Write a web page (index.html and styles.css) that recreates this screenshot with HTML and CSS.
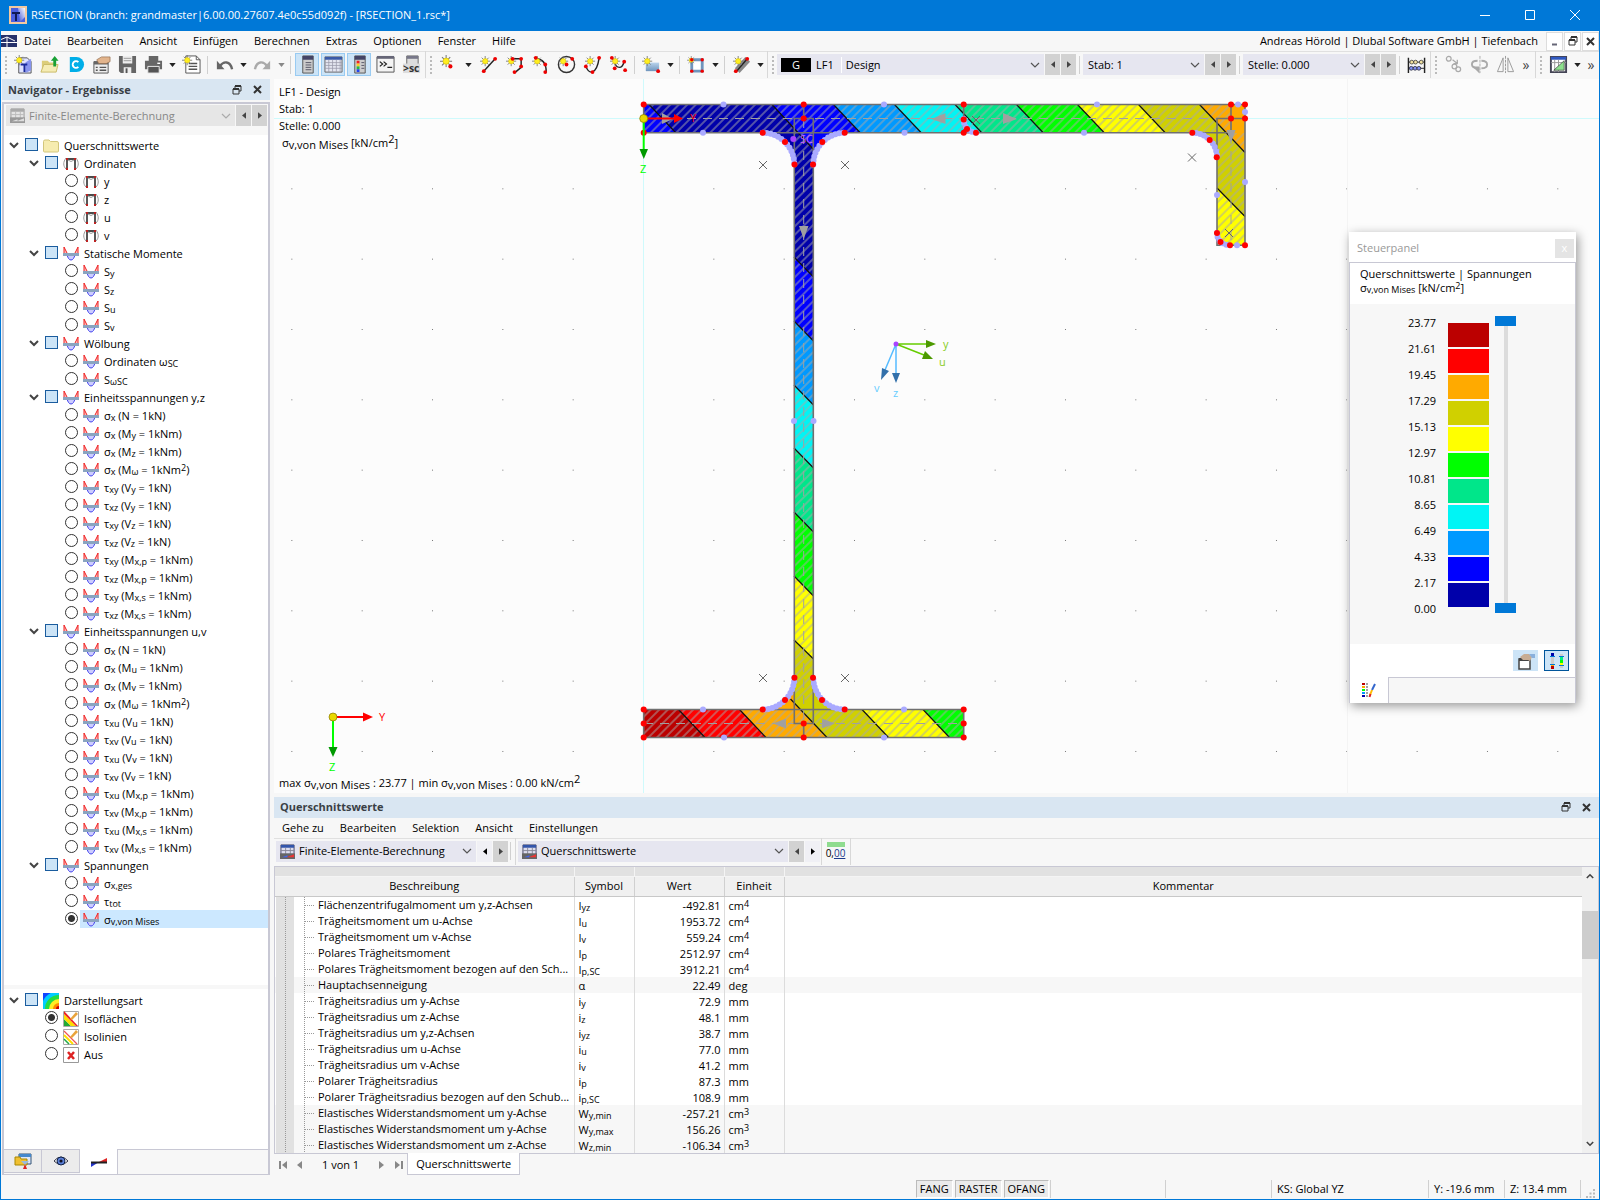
FILE: index.html
```html
<!DOCTYPE html>
<html lang="de">
<head>
<meta charset="utf-8">
<title>RSECTION</title>
<link rel="stylesheet" href="styles.css">
</head>
<body>
<svg class="defs" aria-hidden="true">
  <defs>
    <linearGradient id="gBlue" x1="0" y1="0" x2="0" y2="1"><stop offset="0" stop-color="#b9d3ec"/><stop offset="1" stop-color="#6f95bd"/></linearGradient>
    <linearGradient id="gApp" x1="0" y1="1" x2="1" y2="0"><stop offset="0" stop-color="#3a4fd8"/><stop offset="1" stop-color="#fff"/></linearGradient>
    <symbol id="chev" viewBox="0 0 10 6"><path d="M1 1l4 4 4-4" fill="none" stroke="#555" stroke-width="1.2"/></symbol>
    <symbol id="chevb" viewBox="0 0 10 7"><path d="M1 1l4 4 4-4" fill="none" stroke="#444" stroke-width="2"/></symbol>
    <symbol id="tl" viewBox="0 0 5 8"><path d="M5 0v8L0 4z" fill="currentColor"/></symbol>
    <symbol id="tr" viewBox="0 0 5 8"><path d="M0 0v8l5-4z" fill="currentColor"/></symbol>
    <symbol id="td" viewBox="0 0 8 5"><path d="M0 0h8L4 5z" fill="currentColor"/></symbol>
    <symbol id="rest" viewBox="0 0 10 10"><path d="M3 3V1h6v5H7M1 4h6v5H1z" fill="none" stroke="#333"/><path d="M3 1h6M1 4h6" stroke="#333" stroke-width="2"/></symbol>
    <symbol id="xx" viewBox="0 0 9 9"><path d="M1 1l7 7M8 1L1 8" stroke="#333" stroke-width="2"/></symbol>
    <symbol id="star" viewBox="0 0 12 12"><path d="M6 0v12M0 6h12M2 2l8 8M10 2l-8 8" stroke="#777" stroke-width="1"/><circle cx="6" cy="6" r="3" fill="#ffee20" stroke="#d8c000" stroke-width=".6"/></symbol>
    <symbol id="mom" viewBox="0 0 16 14"><path d="M1 7V0l3.500 7M15 7V0l-3.500 7" fill="#fbb" stroke="#e22" stroke-width="1"/><path d="M4 8c1 3 2 5 4 5s3-2 4-5z" fill="#ccf" stroke="#44e" stroke-width="1"/><path d="M0 7.500h16" stroke="#8aa4c0" stroke-width="3"/></symbol>
    <symbol id="frm" viewBox="0 0 16 14"><path d="M3 1C0 5 0 9 3 12M13 1c3 4 3 8 0 11" fill="none" stroke="#999"/><path d="M4 12V2h8v10" fill="none" stroke="#111" stroke-width="1.400"/><path d="M5 3q3 3 6 0" fill="none" stroke="#999"/><path d="M3 1h2v2H3zM11 1h2v2h-2zM3 11h2v2H3zM11 11h2v2h-2z" fill="#b22"/></symbol>
    <symbol id="fold" viewBox="0 0 16 14"><path d="M.5 2.500q0-1.500 1.500-1.500h4l1.500 1.500h6.500q1.500 0 1.500 1.500v8q0 1-1 1H1.500q-1 0-1-1z" fill="#f6ecb0" stroke="#d2c67c"/></symbol>
    <symbol id="calc" viewBox="0 0 16 16"><path d="M1 1h14v10H1z" fill="#dde" stroke="#446"/><path d="M1 1h14v3H1z" fill="#3355aa"/><path d="M1 7h14M6 4v7M11 4v7" stroke="#889"/><path d="M0 10h16v6H0z" fill="#666"/><path d="M2 14l6-2v2z" fill="#46e"/><path d="M15 11v3H7z" fill="#e33"/></symbol>
    <symbol id="calcg" viewBox="0 0 16 16"><path d="M1 1h14v10H1z" fill="#e4e4e4" stroke="#999"/><path d="M1 1h14v3H1z" fill="#aaa"/><path d="M1 7h14M6 4v7M11 4v7" stroke="#bbb"/><path d="M0 10h16v6H0z" fill="#999"/><path d="M2 14l6-2v2zM15 11v3H7z" fill="#ddd"/></symbol>
    <symbol id="gut" viewBox="0 0 40 16"><path d="M0 0h18v16H0z" fill="#e1e1e1"/><path d="M9.500 0v16M28.500 0v16M29 8.500h10" stroke="#999" stroke-dasharray="1 1" fill="none"/></symbol>
    <pattern id="grid" width="70.33" height="70.33" patternUnits="userSpaceOnUse" x="643" y="118"><path d="M0 0h1v1H0z" fill="#777"/></pattern>
    <pattern id="hatch" width="6" height="6" patternUnits="userSpaceOnUse" patternTransform="rotate(45)"><path d="M2 0v6" stroke="#a8a8a8" stroke-width="1"/></pattern>
    <clipPath id="sec"><path d="M643.700 104.500H1245V245.300H1230A13 12.500 0 0 1 1217 233V157.300A24.500 24.500 0 0 0 1192.300 132.700H844.700A31.700 31.700 0 0 0 813.300 164.500V677.700A31.700 31.700 0 0 0 844.700 709.500H963.700V737.500H643.700V709.500H762.700A31.700 31.700 0 0 0 794.300 677.700V164.500A31.700 31.700 0 0 0 762.700 132.700H643.700Z"/></clipPath>
  </defs>
</svg>

<header class="title">
  <svg width="18" height="18" viewBox="0 0 18 18"><path d="M1 1h16v16H1z" fill="#4a5fe0" stroke="#f3c9a0" stroke-width="2"/><path d="M9 2h7v9l-5 5z" fill="url(#gApp)"/><path d="M3 6h8v2H8v7H6V8H3z" fill="#111a55"/></svg>
  <h1>RSECTION (branch: grandmaster|6.00.00.27607.4e0c55d092f) - [RSECTION_1.rsc*]</h1>
  <button class="wb" aria-label="Minimieren"><svg width="10" height="10"><path d="M0 5.500h10" stroke="#fff"/></svg></button>
  <button class="wb" aria-label="Maximieren"><svg width="10" height="10"><path d="M.5.500h9v9h-9z" fill="none" stroke="#fff"/></svg></button>
  <button class="wb" aria-label="Schließen"><svg width="10" height="10"><path d="M0 0l10 10M10 0L0 10" stroke="#fff"/></svg></button>
</header>

<nav class="menu">
  <svg width="16" height="12" viewBox="0 0 16 12"><path d="M0 0h16v12H0z" fill="#26316b"/><path d="M0 7.500h16M0 4.500L6 2l8 4M6 2v10" stroke="#fff" fill="none"/></svg>
  <a href="#">Datei</a><a href="#">Bearbeiten</a><a href="#">Ansicht</a><a href="#">Einfügen</a><a href="#">Berechnen</a><a href="#">Extras</a><a href="#">Optionen</a><a href="#">Fenster</a><a href="#">Hilfe</a>
  <span class="user">Andreas Hörold | Dlubal Software GmbH | Tiefenbach</span>
  <button class="mdi" aria-label="Fenster minimieren"><svg width="9" height="9"><path d="M2 7.500h5" stroke="#667" stroke-width="2"/></svg></button>
  <button class="mdi" aria-label="Fenster wiederherstellen"><svg width="10" height="10"><use href="#rest"/></svg></button>
  <button class="mdi" aria-label="Fenster schließen"><svg width="9" height="9"><use href="#xx"/></svg></button>
</nav>

<div class="bar">
  <i class="grip"></i>
  <button class="tb" aria-label="Neu"><svg viewBox="0 0 20 20"><path d="M5 3h9l4 4v12H5z" fill="#dfe3ff" stroke="#555"/><path d="M12 8l6-4v12l-6 3z" fill="#8794ee"/><path d="M7 9h7v2h-2v7h-2v-7H7z" fill="#1a2a9c"/><use href="#star" width="11" height="11"/></svg></button>
  <button class="tb" aria-label="Öffnen"><svg viewBox="0 0 20 20"><path d="M2 6h6l2 2h7v10H2z" fill="#dccd7a"/><path d="M1 18l3-8h15l-2 8z" fill="#f5ecb4" stroke="#c9ba66"/><path d="M15.500 1l4 5h-2.500v6h-3V6h-2.500z" fill="#18a035"/></svg></button>
  <button class="tb" aria-label="Cloud"><svg viewBox="0 0 20 20"><path d="M4 2h7a8 8 0 0 1 0 16H4z" fill="#00aee8"/><path d="M13 7.500a3.500 3.500 0 1 0 0 5" fill="none" stroke="#fff" stroke-width="2"/></svg></button>
  <button class="tb" aria-label="Eigenschaften"><svg viewBox="0 0 20 20"><path d="M2 7h15v12H2z" fill="#eee" stroke="#555"/><path d="M2 7h15v3H2z" fill="#666"/><path d="M4 13h2M4 16h2M8 13h7M8 16h7" stroke="#555" stroke-width="1.500"/><path d="M5 5l5-3h9v5l-4 2-8 0z" fill="#e2b48c" stroke="#8f6a4c" stroke-width=".7"/></svg></button>
  <button class="tb" aria-label="Speichern"><svg viewBox="0 0 20 20"><path d="M1 1h18v18H3l-2-2z" fill="#666"/><path d="M5 1h10v8H5zM6 13h8v6H6z" fill="#eee"/><path d="M6 3.500h8M6 6h8" stroke="#999"/><path d="M8 14h2v5H8z" fill="#555"/></svg></button>
  <button class="tb" aria-label="Drucken"><svg viewBox="0 0 20 20"><path d="M5 1h10v5H5zM1 6h18v9H1z" fill="#666"/><path d="M4 12h12v7H4z" fill="#555" stroke="#eee"/><path d="M14 8h3v1.500h-3z" fill="#fff"/></svg></button>
  <button class="ca" aria-label="Druckoptionen"><svg><use href="#td"/></svg></button>
  <button class="tb" aria-label="Protokoll"><svg viewBox="0 0 20 20"><path d="M4 1h11l4 4v14H4z" fill="#fff" stroke="#555"/><path d="M15 1v4h4" fill="none" stroke="#555"/><path d="M7 9h9M7 12h9M7 15h9" stroke="#555" stroke-width="1.500"/><use href="#star" width="11" height="11"/></svg></button>
  <i class="sep"></i>
  <button class="tb" aria-label="Rückgängig"><svg viewBox="0 0 20 20"><path d="M5 12C9 6 16 6 18 15" fill="none" stroke="#666" stroke-width="2.500"/><path d="M2 6v9h8z" fill="#666"/></svg></button>
  <button class="ca" aria-label="Verlauf"><svg><use href="#td"/></svg></button>
  <button class="tb off" aria-label="Wiederholen"><svg viewBox="0 0 20 20"><path d="M15 12C11 6 4 6 2 15" fill="none" stroke="#aaa" stroke-width="2.500"/><path d="M18 6v9h-8z" fill="#aaa"/></svg></button>
  <button class="ca off" aria-label="Verlauf vorwärts"><svg><use href="#td"/></svg></button>
  <i class="sep"></i>
  <button class="tb on" aria-label="Navigator"><svg viewBox="0 0 20 20"><path d="M5 1h11v18H5z" fill="#ccc" stroke="#555"/><path d="M5 1h11v4H5z" fill="#446"/><path d="M8 8h6M8 10.500h6M8 13h6M8 15.500h6" stroke="#556"/></svg></button>
  <button class="tb on" aria-label="Tabellen"><svg viewBox="0 0 20 20"><path d="M1 2h18v16H1z" fill="#e4e6f0" stroke="#666"/><path d="M1 2h18v3H1z" fill="#3a5aa8"/><path d="M1 8h18M1 11h18M1 14h18M5 5v13M9 5v13M13 5v13M17 5v13" stroke="#99a" stroke-width=".8"/></svg></button>
  <button class="tb on" aria-label="Steuerpanel"><svg viewBox="0 0 20 20"><path d="M5 1h11v18H5z" fill="#ccc" stroke="#555"/><path d="M5 1h11v4H5z" fill="#446"/><path d="M7 6h3v3H7z" fill="#e22"/><path d="M7 9h3v3H7z" fill="#fc2"/><path d="M7 12h3v3H7z" fill="#2b4"/><path d="M7 15h3v3H7z" fill="#24e"/><path d="M12 8h3M12 11h3M12 14h3" stroke="#556"/></svg></button>
  <button class="tb" aria-label="Konsole"><svg viewBox="0 0 20 20"><path d="M1 2h18v16H1z" fill="#f4f4f4" stroke="#555"/><path d="M1 1h18v3H1z" fill="#667"/><path d="M4 7l3 2.500L4 12M8 7l3 2.500L8 12M12 13h5" fill="none" stroke="#222" stroke-width="1.300"/></svg></button>
  <button class="tb" aria-label="Skript"><svg viewBox="0 0 20 20"><path d="M5 1h12v9H5z" fill="#ddd" stroke="#666"/><path d="M5 1h12v3H5z" fill="#778"/><path d="M1 9h18v10H1z" fill="#ddd"/><text x="1" y="18" class="sc">&gt;sc</text></svg></button>
  <i class="edge"></i><i class="grip"></i>
  <button class="tb" aria-label="Knoten"><svg viewBox="0 0 20 20"><use href="#star" x="1" y="0" width="13" height="13"/><circle cx="12" cy="12" r="2.200" fill="#e00"/></svg></button>
  <button class="ca wide" aria-label="Knotenoptionen"><svg><use href="#td"/></svg></button>
  <button class="tb" aria-label="Linie"><svg viewBox="0 0 20 20"><path d="M5 17L17 4" stroke="#222" stroke-width="1.500"/><use href="#star" x="1" y="1" width="11" height="11"/><circle cx="5" cy="17" r="2" fill="#e00"/><circle cx="17" cy="4" r="2" fill="#e00"/></svg></button>
  <button class="tb" aria-label="Polylinie"><svg viewBox="0 0 20 20"><path d="M7 4h10v9l-6 5" fill="none" stroke="#222" stroke-width="1.500"/><use href="#star" x="1" y="1" width="11" height="11"/><g fill="#e00"><circle cx="8" cy="4" r="2"/><circle cx="17" cy="4" r="2"/><circle cx="17" cy="12" r="2"/><circle cx="10" cy="18" r="2"/></g></svg></button>
  <button class="tb" aria-label="Bogen"><svg viewBox="0 0 20 20"><path d="M5 4q11 0 11 14" fill="none" stroke="#222" stroke-width="1.500"/><use href="#star" x="1" y="1" width="11" height="11"/><g fill="#e00"><circle cx="5" cy="3" r="2"/><circle cx="15" cy="10" r="2"/><circle cx="15" cy="18" r="2"/></g></svg></button>
  <button class="tb" aria-label="Kreis"><svg viewBox="0 0 20 20"><circle cx="10" cy="10" r="8.500" fill="none" stroke="#333" stroke-width="1.500"/><use href="#star" x="1" y="1" width="11" height="11"/><circle cx="10" cy="10" r="2" fill="#e00"/><circle cx="16" cy="4" r="2" fill="#e00"/></svg></button>
  <button class="tb" aria-label="Parabel"><svg viewBox="0 0 20 20"><path d="M3 11c2 9 11 12 14-8" fill="none" stroke="#222" stroke-width="1.500"/><use href="#star" x="2" y="1" width="11" height="11"/><g fill="#e00"><circle cx="3" cy="12" r="2"/><circle cx="10" cy="18" r="2"/><circle cx="17" cy="3" r="2"/></g></svg></button>
  <button class="tb" aria-label="Spline"><svg viewBox="0 0 20 20"><path d="M4 4c3 6 3 9 7 9 3 0 4-3 5-6" fill="none" stroke="#222" stroke-width="1.500"/><use href="#star" x="1" y="1" width="11" height="11"/><g fill="#e00"><circle cx="3" cy="3" r="2"/><circle cx="6" cy="14" r="2"/><circle cx="16" cy="7" r="2"/><circle cx="17" cy="16" r="2"/></g></svg></button>
  <i class="sep"></i>
  <button class="tb" aria-label="Element"><svg viewBox="0 0 20 20"><path d="M4 8h14v9H4z" fill="url(#gBlue)"/><use href="#star" x="0" y="1" width="11" height="11"/><circle cx="17" cy="17" r="2" fill="#e00"/></svg></button>
  <button class="ca" aria-label="Elementoptionen"><svg><use href="#td"/></svg></button>
  <i class="sep"></i>
  <button class="tb" aria-label="Öffnung"><svg viewBox="0 0 20 20"><path d="M5 5h11v12H5z" fill="#fff" stroke="#6f95bd" stroke-width="3"/><use href="#star" x="0" y="1" width="9" height="9"/><g fill="#e00"><circle cx="5" cy="5" r="1.800"/><circle cx="16" cy="5" r="1.800"/><circle cx="16" cy="17" r="1.800"/><circle cx="5" cy="17" r="1.800"/></g></svg></button>
  <button class="ca" aria-label="Öffnungsoptionen"><svg><use href="#td"/></svg></button>
  <i class="sep"></i>
  <button class="tb" aria-label="Stab"><svg viewBox="0 0 20 20"><path d="M3 14L14 2l5 5L8 19z" fill="#888"/><path d="M5 17L16 4" stroke="#222" stroke-width="1.500"/><use href="#star" x="1" y="1" width="11" height="11"/><circle cx="4" cy="17" r="2" fill="#e00"/><circle cx="16" cy="4" r="2" fill="#e00"/></svg></button>
  <button class="ca" aria-label="Staboptionen"><svg><use href="#td"/></svg></button>
  <i class="edge"></i><i class="grip"></i>
  <div class="combo grow"><span class="badge">G</span><span class="lf">LF1</span><select aria-label="Lastfall"><option>Design</option></select><svg width="10" height="6"><use href="#chev"/></svg></div>
  <button class="arr" aria-label="Zurück"><svg><use href="#tl"/></svg></button><button class="arr" aria-label="Weiter"><svg><use href="#tr"/></svg></button>
  <i class="sep"></i>
  <div class="combo mid"><select aria-label="Stab"><option>Stab: 1</option></select><svg width="10" height="6"><use href="#chev"/></svg></div>
  <button class="arr" aria-label="Zurück"><svg><use href="#tl"/></svg></button><button class="arr" aria-label="Weiter"><svg><use href="#tr"/></svg></button>
  <i class="sep"></i>
  <div class="combo mid"><select aria-label="Stelle"><option>Stelle: 0.000</option></select><svg width="10" height="6"><use href="#chev"/></svg></div>
  <button class="arr" aria-label="Zurück"><svg><use href="#tl"/></svg></button><button class="arr" aria-label="Weiter"><svg><use href="#tr"/></svg></button>
  <i class="sep"></i>
  <button class="tb" aria-label="Berechnen"><svg viewBox="0 0 20 20"><path d="M1.500 3v16M18.500 3v16" stroke="#222" stroke-width="1.500"/><path d="M2 7.500h16M2 14h16" stroke="#222"/><g fill="#f0e0a0" stroke="#333" stroke-width=".8"><circle cx="5" cy="7.500" r="2"/><circle cx="9" cy="7.500" r="2"/><circle cx="15" cy="7.500" r="2"/></g><g fill="#8090f0" stroke="#223" stroke-width=".8"><circle cx="4.500" cy="14" r="2"/><circle cx="8.500" cy="14" r="2"/><circle cx="12.500" cy="14" r="2"/></g></svg></button>
  <i class="edge"></i><i class="grip"></i>
  <button class="tb off" aria-label="Verschieben"><svg viewBox="0 0 20 20" fill="none" stroke="#aaa" stroke-width="1.300"><circle cx="5" cy="4" r="2.500"/><circle cx="11" cy="12" r="2.500"/><circle cx="15" cy="15" r="2.500"/><path d="M9 5l5 4M14 5v4h-4"/></svg></button>
  <button class="tb off" aria-label="Drehen"><svg viewBox="0 0 20 20" fill="none" stroke="#aaa" stroke-width="2"><path d="M8 14c-8-1-8-8 0-8M12 6c8 0 8 8 0 8"/><path d="M5 13h4v4z" fill="#aaa"/><path d="M10.500 1v18" stroke-width="1" stroke-dasharray="3 1"/></svg></button>
  <button class="tb off" aria-label="Spiegeln"><svg viewBox="0 0 20 20" fill="none" stroke="#999"><path d="M1.500 17.500L7.500 3v14.500zM18.500 17.500L12.500 3v14.500z"/><path d="M10 1v18" stroke-dasharray="3 1"/></svg></button>
  <button class="more" aria-label="Mehr">»</button>
  <i class="edge"></i><i class="grip"></i>
  <button class="tb" aria-label="Ansicht"><svg viewBox="0 0 20 20"><path d="M2 2h16v16H2z" fill="#fff" stroke="#445" stroke-width="2"/><path d="M2 2h16v3H2z" fill="#2f58c0"/><path d="M6 5v13M10 5v13M2 8h16" stroke="#999"/><path d="M5 16L16 6v10z" fill="#8de08d" stroke="#333" stroke-width=".7"/></svg></button>
  <button class="ca" aria-label="Ansichtsoptionen"><svg><use href="#td"/></svg></button>
  <button class="more" aria-label="Mehr">»</button>
</div>

<main>
  <aside class="nav">
    <h2 class="head">Navigator - Ergebnisse<button aria-label="Abdocken"><svg width="10" height="10"><use href="#rest"/></svg></button><button aria-label="Schließen"><svg width="9" height="9"><use href="#xx"/></svg></button></h2>
    <div class="frame">
      <div class="navsel">
        <div class="combo dis"><svg width="15" height="15"><use href="#calcg"/></svg><select aria-label="Berechnung" disabled><option>Finite-Elemente-Berechnung</option></select><svg width="10" height="6" opacity=".4"><use href="#chev"/></svg></div>
        <button class="arr" aria-label="Zurück"><svg><use href="#tl"/></svg></button><button class="arr" aria-label="Weiter"><svg><use href="#tr"/></svg></button>
      </div>
      <div class="tree">
        <label class="row l0"><svg class="cv"><use href="#chevb"/></svg><input type="checkbox"><span class="cell"><svg><use href="#fold"/></svg>Querschnittswerte</span></label>
        <label class="row l1"><svg class="cv"><use href="#chevb"/></svg><input type="checkbox"><span class="cell"><svg><use href="#frm"/></svg>Ordinaten</span></label>
        <label class="row l2"><input type="radio" name="res"><span class="cell"><svg><use href="#frm"/></svg>y</span></label>
        <label class="row l2"><input type="radio" name="res"><span class="cell"><svg><use href="#frm"/></svg>z</span></label>
        <label class="row l2"><input type="radio" name="res"><span class="cell"><svg><use href="#frm"/></svg>u</span></label>
        <label class="row l2"><input type="radio" name="res"><span class="cell"><svg><use href="#frm"/></svg>v</span></label>
        <label class="row l1"><svg class="cv"><use href="#chevb"/></svg><input type="checkbox"><span class="cell"><svg><use href="#mom"/></svg>Statische Momente</span></label>
        <label class="row l2"><input type="radio" name="res"><span class="cell"><svg><use href="#mom"/></svg><span>S<sub>y</sub></span></span></label>
        <label class="row l2"><input type="radio" name="res"><span class="cell"><svg><use href="#mom"/></svg><span>S<sub>z</sub></span></span></label>
        <label class="row l2"><input type="radio" name="res"><span class="cell"><svg><use href="#mom"/></svg><span>S<sub>u</sub></span></span></label>
        <label class="row l2"><input type="radio" name="res"><span class="cell"><svg><use href="#mom"/></svg><span>S<sub>v</sub></span></span></label>
        <label class="row l1"><svg class="cv"><use href="#chevb"/></svg><input type="checkbox"><span class="cell"><svg><use href="#mom"/></svg>Wölbung</span></label>
        <label class="row l2"><input type="radio" name="res"><span class="cell"><svg><use href="#mom"/></svg><span>Ordinaten ω<sub>SC</sub></span></span></label>
        <label class="row l2"><input type="radio" name="res"><span class="cell"><svg><use href="#mom"/></svg><span>S<sub>ωSC</sub></span></span></label>
        <label class="row l1"><svg class="cv"><use href="#chevb"/></svg><input type="checkbox"><span class="cell"><svg><use href="#mom"/></svg>Einheitsspannungen y,z</span></label>
        <label class="row l2"><input type="radio" name="res"><span class="cell"><svg><use href="#mom"/></svg><span>σ<sub>x</sub> (N = 1kN)</span></span></label>
        <label class="row l2"><input type="radio" name="res"><span class="cell"><svg><use href="#mom"/></svg><span>σ<sub>x</sub> (M<sub>y</sub> = 1kNm)</span></span></label>
        <label class="row l2"><input type="radio" name="res"><span class="cell"><svg><use href="#mom"/></svg><span>σ<sub>x</sub> (M<sub>z</sub> = 1kNm)</span></span></label>
        <label class="row l2"><input type="radio" name="res"><span class="cell"><svg><use href="#mom"/></svg><span>σ<sub>x</sub> (M<sub>ω</sub> = 1kNm<sup>2</sup>)</span></span></label>
        <label class="row l2"><input type="radio" name="res"><span class="cell"><svg><use href="#mom"/></svg><span>τ<sub>xy</sub> (V<sub>y</sub> = 1kN)</span></span></label>
        <label class="row l2"><input type="radio" name="res"><span class="cell"><svg><use href="#mom"/></svg><span>τ<sub>xz</sub> (V<sub>y</sub> = 1kN)</span></span></label>
        <label class="row l2"><input type="radio" name="res"><span class="cell"><svg><use href="#mom"/></svg><span>τ<sub>xy</sub> (V<sub>z</sub> = 1kN)</span></span></label>
        <label class="row l2"><input type="radio" name="res"><span class="cell"><svg><use href="#mom"/></svg><span>τ<sub>xz</sub> (V<sub>z</sub> = 1kN)</span></span></label>
        <label class="row l2"><input type="radio" name="res"><span class="cell"><svg><use href="#mom"/></svg><span>τ<sub>xy</sub> (M<sub>x,p</sub> = 1kNm)</span></span></label>
        <label class="row l2"><input type="radio" name="res"><span class="cell"><svg><use href="#mom"/></svg><span>τ<sub>xz</sub> (M<sub>x,p</sub> = 1kNm)</span></span></label>
        <label class="row l2"><input type="radio" name="res"><span class="cell"><svg><use href="#mom"/></svg><span>τ<sub>xy</sub> (M<sub>x,s</sub> = 1kNm)</span></span></label>
        <label class="row l2"><input type="radio" name="res"><span class="cell"><svg><use href="#mom"/></svg><span>τ<sub>xz</sub> (M<sub>x,s</sub> = 1kNm)</span></span></label>
        <label class="row l1"><svg class="cv"><use href="#chevb"/></svg><input type="checkbox"><span class="cell"><svg><use href="#mom"/></svg>Einheitsspannungen u,v</span></label>
        <label class="row l2"><input type="radio" name="res"><span class="cell"><svg><use href="#mom"/></svg><span>σ<sub>x</sub> (N = 1kN)</span></span></label>
        <label class="row l2"><input type="radio" name="res"><span class="cell"><svg><use href="#mom"/></svg><span>σ<sub>x</sub> (M<sub>u</sub> = 1kNm)</span></span></label>
        <label class="row l2"><input type="radio" name="res"><span class="cell"><svg><use href="#mom"/></svg><span>σ<sub>x</sub> (M<sub>v</sub> = 1kNm)</span></span></label>
        <label class="row l2"><input type="radio" name="res"><span class="cell"><svg><use href="#mom"/></svg><span>σ<sub>x</sub> (M<sub>ω</sub> = 1kNm<sup>2</sup>)</span></span></label>
        <label class="row l2"><input type="radio" name="res"><span class="cell"><svg><use href="#mom"/></svg><span>τ<sub>xu</sub> (V<sub>u</sub> = 1kN)</span></span></label>
        <label class="row l2"><input type="radio" name="res"><span class="cell"><svg><use href="#mom"/></svg><span>τ<sub>xv</sub> (V<sub>u</sub> = 1kN)</span></span></label>
        <label class="row l2"><input type="radio" name="res"><span class="cell"><svg><use href="#mom"/></svg><span>τ<sub>xu</sub> (V<sub>v</sub> = 1kN)</span></span></label>
        <label class="row l2"><input type="radio" name="res"><span class="cell"><svg><use href="#mom"/></svg><span>τ<sub>xv</sub> (V<sub>v</sub> = 1kN)</span></span></label>
        <label class="row l2"><input type="radio" name="res"><span class="cell"><svg><use href="#mom"/></svg><span>τ<sub>xu</sub> (M<sub>x,p</sub> = 1kNm)</span></span></label>
        <label class="row l2"><input type="radio" name="res"><span class="cell"><svg><use href="#mom"/></svg><span>τ<sub>xv</sub> (M<sub>x,p</sub> = 1kNm)</span></span></label>
        <label class="row l2"><input type="radio" name="res"><span class="cell"><svg><use href="#mom"/></svg><span>τ<sub>xu</sub> (M<sub>x,s</sub> = 1kNm)</span></span></label>
        <label class="row l2"><input type="radio" name="res"><span class="cell"><svg><use href="#mom"/></svg><span>τ<sub>xv</sub> (M<sub>x,s</sub> = 1kNm)</span></span></label>
        <label class="row l1"><svg class="cv"><use href="#chevb"/></svg><input type="checkbox"><span class="cell"><svg><use href="#mom"/></svg>Spannungen</span></label>
        <label class="row l2"><input type="radio" name="res"><span class="cell"><svg><use href="#mom"/></svg><span>σ<sub>x,ges</sub></span></span></label>
        <label class="row l2"><input type="radio" name="res"><span class="cell"><svg><use href="#mom"/></svg><span>τ<sub>tot</sub></span></span></label>
        <label class="row l2"><input type="radio" name="res" checked><span class="cell sel"><svg><use href="#mom"/></svg><span>σ<sub>v,von Mises</sub></span></span></label>
      </div>
      <div class="tree low">
        <label class="row l0"><svg class="cv"><use href="#chevb"/></svg><input type="checkbox"><span class="cell"><svg viewBox="0 0 16 16"><path d="M0 0h16v16H0z" fill="#14f"/><circle cx="16" cy="16" r="18" fill="#0cf"/><circle cx="16" cy="16" r="14" fill="#2d4"/><circle cx="16" cy="16" r="10" fill="#fe2"/><circle cx="16" cy="16" r="6" fill="#f80"/><circle cx="16" cy="16" r="3" fill="#c00"/></svg>Darstellungsart</span></label>
        <label class="row l1r"><input type="radio" name="art" checked><span class="cell"><svg viewBox="0 0 16 16"><path d="M.5.500h15v15H.5z" fill="#fff" stroke="#aaa"/><path d="M1 8v7h7z" fill="#2a3"/><path d="M1 3v5l7 7h5z" fill="#fd0"/><path d="M1 0v3l12 12h2z" fill="#e22"/><path d="M7 8l6-7 2 2-6 6z" fill="#e9a33b"/></svg>Isoflächen</span></label>
        <label class="row l1r"><input type="radio" name="art"><span class="cell"><svg viewBox="0 0 16 16"><path d="M.5.500h15v15H.5z" fill="#fff" stroke="#aaa"/><path d="M1 2l13 13" stroke="#e55" stroke-width="1.200"/><path d="M1 6l9 9" stroke="#fd0" stroke-width="2"/><path d="M1 10l5 5" stroke="#2a4" stroke-width="1.500"/><path d="M7 8l6-7 2 2-6 6z" fill="#e9a33b"/></svg>Isolinien</span></label>
        <label class="row l1r"><input type="radio" name="art"><span class="cell"><svg viewBox="0 0 16 16"><path d="M.5.500h15v15H.5z" fill="#fff" stroke="#999"/><path d="M5 5l6 7M11 5l-6 7" stroke="#d22" stroke-width="2.500"/></svg>Aus</span></label>
      </div>
      <div class="tabs">
        <button aria-label="Daten"><svg viewBox="0 0 18 16"><path d="M5 1h12v10H5z" fill="#dfe8f8" stroke="#357"/><path d="M5 1h12v3H5z" fill="#48c"/><path d="M1 4h5l1 2h6v6H1z" fill="#f0c030" stroke="#a80"/><path d="M7 8h8l-4 4z" fill="#9bd"/><path d="M9 16l2-5 2 5z" fill="#d22"/></svg></button>
        <button aria-label="Anzeige"><svg viewBox="0 0 18 16"><path d="M2 8q7-8 14 0q-7 7-14 0z" fill="#fff" stroke="#334"/><circle cx="9" cy="8" r="4" fill="#5a7fd8" stroke="#124"/><circle cx="9" cy="8" r="1.600" fill="#112"/></svg></button>
        <button class="act" aria-label="Ergebnisse"><svg viewBox="0 0 18 16"><path d="M1 8v5l8-5z" fill="#23c"/><path d="M17 8V4L9 8z" fill="#d22"/><path d="M1 8.500h16" stroke="#222" stroke-width="2"/></svg></button>
      </div>
    </div>
  </aside>

  <div class="work">
    <section class="canvas">
      <svg class="draw" role="img" aria-label="Querschnitt mit Vergleichsspannungen">
        <g transform="translate(-274 -79)">
          <rect x="274" y="79" width="1400" height="900" fill="url(#grid)"/>
          <path d="M643.500 79v800M274 118.500h1400" stroke="#cffafc"/>
          <path d="M1347.500 79v800" stroke="#f4f4f4"/>
          <g clip-path="url(#sec)">
            <path d="M640 100H1250V250H640z" fill="#0000ff"/>
            <path d="M649 104L719 180H640V800H830V180H842L772 104z" fill="#0000aa"/>
            <path d="M833.500 104L903 180H1300V104z" fill="#0099ff"/>
            <path d="M894.500 104L964 180H1300V104z" fill="#00f5f5"/>
            <path d="M955 104L1025 180H1300V104z" fill="#00e68a"/>
            <path d="M1016.500 104L1086 180H1300V104z" fill="#00ff00"/>
            <path d="M1077.500 104L1147 180H1300V104z" fill="#ffff00"/>
            <path d="M1138.500 104L1209 180V250H1300V104z" fill="#d0d000"/>
            <path d="M1199.500 104L1246 153.500V104z" fill="#ffaa00"/>
            <path d="M1216 187L1246 217.500V250H1210z" fill="#ffff00"/>
            <path d="M794 257L814 277V700H794z" fill="#0000ff"/>
            <path d="M794 321L814 341V700H794z" fill="#0099ff"/>
            <path d="M794 385L814 405V700H794z" fill="#00f5f5"/>
            <path d="M794 448L814 468V700H794z" fill="#00e68a"/>
            <path d="M794 512L814 532V700H794z" fill="#00ff00"/>
            <path d="M794 576L814 596V700H794z" fill="#ffff00"/>
            <path d="M794 640L814 660V700H794z" fill="#d0d000"/>
            <path d="M640 709H720V740H640z" fill="#bb0000"/>
            <path d="M678.500 709L705 738H900V709z" fill="#ff0000"/>
            <path d="M739.500 709L766 738H900V698H794V678H740z" fill="#ffaa00"/>
            <path d="M794 677V703L827 738H970V709H850V677z" fill="#d0d000"/>
            <path d="M862 709L889 738H970V709z" fill="#ffff00"/>
            <path d="M923 709L950 738H970V709z" fill="#00ff00"/>
          </g>
          <g fill="url(#hatch)"><path d="M644 105H1230V133H644zM795 133H813V700H795zM1217 133H1245V245H1217zM644 710H963V737H644z"/></g>
          <path d="M649 104.500l26.500 28M772 104.500L814 150M833.500 104.500l26.500 28M894.500 104.500l26.500 28M955 104.500l26.500 28M1016.500 104.500l26.500 28M1077.500 104.500l26.500 28M1138.500 104.500l26.500 28M1199.500 104.500l45.500 48M1217 188l28 28.500M794 257l19.500 20M794 321l19.500 20M794 385l19.500 20M794 448l19.500 20M794 512l19.500 20M794 576l19.500 20M794 640l19.500 19M678.500 709.500l26.500 28M739.500 709.500l26.500 28M790.500 699l36.500 38.500M862 709.500l26.500 28M923 709.500l26.500 28" stroke="#111" stroke-width="1.200" fill="none"/>
          <path d="M655 118.500H1240M644 723.500H963M803.700 119V723M1231 119V245" stroke="#a0a0a0" stroke-dasharray="9 7" fill="none"/>
          <path d="M643.700 104.500H1245V245.300H1217V132.700M1207 132.700H643.700V104.500M1192 132.700H1227M794.300 709.500V118.500H813.300V709.500M643.700 709.500H963.700V737.500H643.700zM794.300 709.500V723.500H813.300V709.500M803.700 104V119M803.700 723V738M963.700 104V133M1231 104V133M1217 132.700V118.500H1245" fill="none" stroke="#707070" stroke-width="1.600"/>
          <g fill="#a0a0a0"><path d="M662 113v11l11-5zM945.500 113v11l-14-5zM1003 113v11l14-5zM799 226h9.500l-4.800 13zM1226.500 130h9l-4.500 13zM786 718.500v10l-13-5zM822 718.500v10l13-5z"/></g>
          <g fill="none" stroke="#aaaaff" stroke-width="6" stroke-linecap="round" stroke-dasharray="0 4"><path d="M762.700 132.700A31.700 31.700 0 0 1 794.300 164.500M813.300 164.500A31.700 31.700 0 0 1 844.700 132.700M844.700 709.500A31.700 31.700 0 0 1 813.300 677.700M794.300 677.700A31.700 31.700 0 0 1 762.700 709.500M1192.300 132.700A24.500 24.500 0 0 1 1217 157.300M1217 233A13 12 0 0 0 1230 245.300M963.700 119A13 13 0 0 0 976 132.700"/></g>
          <g fill="#aaaaff"><circle cx="723.500" cy="104.500" r="3"/><circle cx="703" cy="132.700" r="3"/><circle cx="884" cy="104.500" r="3"/><circle cx="904.500" cy="132.700" r="3"/><circle cx="1097" cy="104.500" r="3"/><circle cx="1084" cy="132.700" r="3"/><circle cx="1238" cy="104.500" r="3"/><circle cx="1245" cy="112" r="3"/><circle cx="1245" cy="182" r="3"/><circle cx="1217" cy="195" r="3"/><circle cx="1237" cy="245.300" r="3"/><circle cx="794" cy="421" r="3"/><circle cx="813.500" cy="421" r="3"/><circle cx="703" cy="709.500" r="3"/><circle cx="724" cy="737.500" r="3"/><circle cx="904" cy="709.500" r="3"/><circle cx="884" cy="737.500" r="3"/></g>
          <g fill="#ff0000"><circle cx="643.700" cy="104.500" r="3"/><circle cx="643.700" cy="132.700" r="3"/><circle cx="803.700" cy="104.500" r="3"/><circle cx="803.700" cy="118.500" r="3"/><circle cx="963.700" cy="104.500" r="3"/><circle cx="963.700" cy="119.500" r="3"/><circle cx="963.700" cy="132.700" r="3"/><circle cx="967" cy="129" r="3"/><circle cx="976" cy="132.700" r="3"/><circle cx="1231" cy="104.500" r="3"/><circle cx="1245" cy="104.500" r="3"/><circle cx="1231" cy="118.500" r="3"/><circle cx="1245" cy="118.500" r="3"/><circle cx="762.700" cy="132.700" r="3"/><circle cx="785" cy="142" r="3"/><circle cx="794.500" cy="164.500" r="3"/><circle cx="844.700" cy="132.700" r="3"/><circle cx="822.300" cy="142" r="3"/><circle cx="813" cy="164.500" r="3"/><circle cx="1192.300" cy="132.700" r="3"/><circle cx="1209.700" cy="140" r="3"/><circle cx="1216.700" cy="157.300" r="3"/><circle cx="1217" cy="233" r="3"/><circle cx="1220.500" cy="242" r="3"/><circle cx="1230" cy="245.300" r="3"/><circle cx="1245" cy="245.300" r="3"/><circle cx="794.500" cy="677.700" r="3"/><circle cx="813" cy="677.700" r="3"/><circle cx="785" cy="700" r="3"/><circle cx="822" cy="700" r="3"/><circle cx="762.700" cy="709.500" r="3"/><circle cx="844.700" cy="709.500" r="3"/><circle cx="643.700" cy="709.500" r="3"/><circle cx="643.700" cy="723.500" r="3"/><circle cx="643.700" cy="737.500" r="3"/><circle cx="803.700" cy="723.500" r="3"/><circle cx="803.700" cy="737.500" r="3"/><circle cx="963.700" cy="709.500" r="3"/><circle cx="963.700" cy="723.500" r="3"/><circle cx="963.700" cy="737.500" r="3"/></g>
          <path d="M759 161l8 8m0-8l-8 8M841 161l8 8m0-8l-8 8M1188 153.500l8 8m0-8l-8 8M1225 229l8 8m0-8l-8 8M972 116l8 8m0-8l-8 8M759 674l8 8m0-8l-8 8M841 674l8 8m0-8l-8 8" stroke="#666" fill="none"/>
          <circle cx="793.300" cy="139" r="3" fill="#aa44ff"/><text x="800" y="143" fill="#c060ff">SC</text>
          <path d="M644 118.500h31" stroke="#f00" stroke-width="2"/><path d="M674 114v9l9-4.500z" fill="#f00"/><text x="690" y="122" fill="#f00">Y</text>
          <path d="M643.700 118v32" stroke="#0f0" stroke-width="2"/><path d="M639.500 149h8.500l-4.200 10z" fill="#009900"/><circle cx="643.700" cy="118.500" r="4" fill="#e8d800" stroke="#887700" stroke-width=".7"/><text x="640" y="173" fill="#0f0">Z</text>
          <path d="M333 717h31" stroke="#f00" stroke-width="2"/><path d="M363 712.500v9l10-4.500z" fill="#f00"/><text x="379" y="721" fill="#f00">Y</text>
          <path d="M333 717v31" stroke="#0f0" stroke-width="2"/><path d="M328.500 747h9l-4.500 10z" fill="#009900"/><circle cx="333" cy="717" r="4" fill="#e8d800" stroke="#887700" stroke-width=".7"/><text x="329" y="771" fill="#0f0">Z</text>
          <path d="M896 344h32M896 344l28 11" stroke="#66cc00" stroke-width="1.500"/><path d="M926 340v8l10-4zM925 351l-3 8 11 0z" fill="#4c9900"/>
          <path d="M896 344l-11 26M896 344v30" stroke="#55bbff" stroke-width="1.500"/><path d="M882 368l7 3-8 9zM892 373h8l-4 10z" fill="#3370aa"/><circle cx="896" cy="344" r="2.500" fill="#aa44ff"/>
          <text x="943" y="348" fill="#88cc22">y</text><text x="939" y="366" fill="#88cc22">u</text><text x="874" y="392" fill="#66ccff">v</text><text x="893" y="397" fill="#66ccff">z</text>
        </g>
      </svg>
      <div class="info"><p>LF1 - Design</p><p>Stab: 1</p><p>Stelle: 0.000</p><p class="unit">σ<sub>v,von Mises</sub> [kN/cm<sup>2</sup>]</p></div>
      <p class="ext">max σ<sub>v,von Mises</sub> : 23.77 | min σ<sub>v,von Mises</sub> : 0.00 kN/cm<sup>2</sup></p>
      <aside class="panel">
        <h3>Steuerpanel<button aria-label="Panel schließen">x</button></h3>
        <div class="pbody">
          <p class="ptxt">Querschnittswerte | Spannungen<br>σ<sub>v,von Mises</sub> [kN/cm<sup>2</sup>]</p>
          <div class="scale">
            <ol class="vals"><li>23.77</li><li>21.61</li><li>19.45</li><li>17.29</li><li>15.13</li><li>12.97</li><li>10.81</li><li>8.65</li><li>6.49</li><li>4.33</li><li>2.17</li><li>0.00</li></ol>
            <div class="sw"><i class="c1"></i><i class="c2"></i><i class="c3"></i><i class="c4"></i><i class="c5"></i><i class="c6"></i><i class="c7"></i><i class="c8"></i><i class="c9"></i><i class="c10"></i><i class="c11"></i></div>
            <div class="sl"><input type="range" min="0" max="100" value="100" aria-label="Obere Grenze"><input type="range" min="0" max="100" value="0" aria-label="Untere Grenze"></div>
          </div>
          <div class="pbtn">
            <button aria-label="Optionen"><svg width="18" height="18" viewBox="0 0 18 18"><path d="M2 7h11v10H2z" fill="#fff" stroke="#444" stroke-width="1.500"/><path d="M2 6h11v3H2z" fill="#444"/><path d="M3 5l4-3h5l3 3-2 4-2-1H6z" fill="#c8ad94"/><path d="M12 2h6v4h-3z" fill="#8ab0dc"/></svg></button>
            <button class="on" aria-label="Grenzen"><svg width="18" height="18" viewBox="0 0 18 18"><path d="M3 2h3v14H3zM12 2h3v14h-3z" fill="#ccc"/><path d="M3 1h3v3H3z" fill="#00a"/><path d="M3 12h3v2H3z" fill="#fa0"/><path d="M3 14h3v3H3z" fill="#b00"/><path d="M12 5h3v3h-3z" fill="#0e8"/><path d="M12 8h3v3h-3z" fill="#0f0"/><path d="M12 11h3v2h-3z" fill="#ff0"/><path d="M2 4.500h5M2 12.500h5M11 4.500h5M11 13.500h5" stroke="#0078d7"/></svg></button>
          </div>
          <div class="ptab"><button aria-label="Farbskala"><svg width="16" height="16" viewBox="0 0 16 16"><path d="M1 1h3v2H1z" fill="#b00"/><path d="M1 4h3v2H1z" fill="#fa0"/><path d="M1 7h3v2H1z" fill="#0f0"/><path d="M1 10h3v2H1z" fill="#09f"/><path d="M1 13h3v2H1z" fill="#00a"/><path d="M5 2h2M5 5h2M5 8h2M5 11h2M5 14h2" stroke="#444"/><path d="M14 2l-3 6" stroke="#36c" stroke-width="2"/><path d="M11 8l-2 5" stroke="#fb0" stroke-width="2"/><path d="M9.500 12l-1 3" stroke="#d22" stroke-width="2"/></svg></button></div>
        </div>
      </aside>
    </section>

    <section class="bottom">
      <h2 class="head">Querschnittswerte<button aria-label="Abdocken"><svg width="10" height="10"><use href="#rest"/></svg></button><button aria-label="Schließen"><svg width="9" height="9"><use href="#xx"/></svg></button></h2>
      <nav class="menu sub"><a href="#">Gehe zu</a><a href="#">Bearbeiten</a><a href="#">Selektion</a><a href="#">Ansicht</a><a href="#">Einstellungen</a></nav>
      <div class="bar low">
        <div class="combo w200"><svg width="15" height="15"><use href="#calc"/></svg><select aria-label="Berechnung"><option>Finite-Elemente-Berechnung</option></select><svg width="10" height="6"><use href="#chev"/></svg></div>
        <button class="arr live" aria-label="Zurück"><svg><use href="#tl"/></svg></button><button class="arr" aria-label="Weiter"><svg><use href="#tr"/></svg></button>
        <i class="sep"></i><i class="edge"></i>
        <div class="combo w270"><svg width="15" height="15"><use href="#calc"/></svg><select aria-label="Tabelle"><option>Querschnittswerte</option></select><svg width="10" height="6"><use href="#chev"/></svg></div>
        <button class="arr" aria-label="Zurück"><svg><use href="#tl"/></svg></button><button class="arr live" aria-label="Weiter"><svg><use href="#tr"/></svg></button>
        <i class="edge"></i>
        <button class="dec" aria-label="Dezimalstellen"><i></i><span>0,<u>00</u></span></button>
        <i class="edge"></i>
      </div>
      <div class="grid">
        <table>
          <colgroup><col class="k1"><col class="k2"><col class="k3"><col class="k4"><col></colgroup>
          <thead><tr class="strip"><td></td><td></td><td></td><td></td><td></td></tr><tr><th>Beschreibung</th><th>Symbol</th><th>Wert</th><th>Einheit</th><th>Kommentar</th></tr></thead>
          <tbody>
            <tr><td><svg class="gut"><use href="#gut"/></svg>Flächenzentrifugalmoment um y,z-Achsen</td><td>I<sub>yz</sub></td><td>-492.81</td><td>cm<sup>4</sup></td><td></td></tr>
            <tr><td><svg class="gut"><use href="#gut"/></svg>Trägheitsmoment um u-Achse</td><td>I<sub>u</sub></td><td>1953.72</td><td>cm<sup>4</sup></td><td></td></tr>
            <tr><td><svg class="gut"><use href="#gut"/></svg>Trägheitsmoment um v-Achse</td><td>I<sub>v</sub></td><td>559.24</td><td>cm<sup>4</sup></td><td></td></tr>
            <tr><td><svg class="gut"><use href="#gut"/></svg>Polares Trägheitsmoment</td><td>I<sub>p</sub></td><td>2512.97</td><td>cm<sup>4</sup></td><td></td></tr>
            <tr><td><svg class="gut"><use href="#gut"/></svg>Polares Trägheitsmoment bezogen auf den Sch...</td><td>I<sub>p,SC</sub></td><td>3912.21</td><td>cm<sup>4</sup></td><td></td></tr>
            <tr class="alt"><td><svg class="gut"><use href="#gut"/></svg>Hauptachsenneigung</td><td>α</td><td>22.49</td><td>deg</td><td></td></tr>
            <tr><td><svg class="gut"><use href="#gut"/></svg>Trägheitsradius um y-Achse</td><td>i<sub>y</sub></td><td>72.9</td><td>mm</td><td></td></tr>
            <tr><td><svg class="gut"><use href="#gut"/></svg>Trägheitsradius um z-Achse</td><td>i<sub>z</sub></td><td>48.1</td><td>mm</td><td></td></tr>
            <tr><td><svg class="gut"><use href="#gut"/></svg>Trägheitsradius um y,z-Achsen</td><td>i<sub>yz</sub></td><td>38.7</td><td>mm</td><td></td></tr>
            <tr><td><svg class="gut"><use href="#gut"/></svg>Trägheitsradius um u-Achse</td><td>i<sub>u</sub></td><td>77.0</td><td>mm</td><td></td></tr>
            <tr><td><svg class="gut"><use href="#gut"/></svg>Trägheitsradius um v-Achse</td><td>i<sub>v</sub></td><td>41.2</td><td>mm</td><td></td></tr>
            <tr><td><svg class="gut"><use href="#gut"/></svg>Polarer Trägheitsradius</td><td>i<sub>p</sub></td><td>87.3</td><td>mm</td><td></td></tr>
            <tr><td><svg class="gut"><use href="#gut"/></svg>Polarer Trägheitsradius bezogen auf den Schub...</td><td>i<sub>p,SC</sub></td><td>108.9</td><td>mm</td><td></td></tr>
            <tr class="alt"><td><svg class="gut"><use href="#gut"/></svg>Elastisches Widerstandsmoment um y-Achse</td><td>W<sub>y,min</sub></td><td>-257.21</td><td>cm<sup>3</sup></td><td></td></tr>
            <tr class="alt"><td><svg class="gut"><use href="#gut"/></svg>Elastisches Widerstandsmoment um y-Achse</td><td>W<sub>y,max</sub></td><td>156.26</td><td>cm<sup>3</sup></td><td></td></tr>
            <tr class="alt"><td><svg class="gut"><use href="#gut"/></svg>Elastisches Widerstandsmoment um z-Achse</td><td>W<sub>z,min</sub></td><td>-106.34</td><td>cm<sup>3</sup></td><td></td></tr>
          </tbody>
        </table>
        <div class="sb"><svg class="up"><use href="#chevb"/></svg><i></i><svg><use href="#chevb"/></svg></div>
      </div>
      <div class="sheets">
        <button class="pg" aria-label="Erste"><svg width="8" height="8"><path d="M1 0v8" stroke="currentColor" stroke-width="2"/><path d="M8 0v8L3 4z" fill="currentColor"/></svg></button>
        <button class="pg" aria-label="Vorige"><svg width="5" height="8"><use href="#tl"/></svg></button>
        <span>1 von 1</span>
        <button class="pg" aria-label="Nächste"><svg width="5" height="8"><use href="#tr"/></svg></button>
        <button class="pg" aria-label="Letzte"><svg width="8" height="8"><path d="M7 0v8" stroke="currentColor" stroke-width="2"/><path d="M0 0v8l5-4z" fill="currentColor"/></svg></button>
        <button class="sheet">Querschnittswerte</button>
      </div>
    </section>
  </div>
</main>

<footer class="status">
  <div class="snap"><button>FANG</button><button>RASTER</button><button>OFANG</button></div>
  <span class="s1"></span><span class="s2"></span><span class="s3">KS: Global YZ</span><span class="s4">Y: -19.6 mm</span><span class="s4">Z: 13.4 mm</span>
  <span class="s5"><svg width="9" height="9"><path d="M7 0h2v2H7zM7 3.500h2v2H7zM3.500 3.500h2v2h-2zM7 7h2v2H7zM3.500 7h2v2h-2zM0 7h2v2H0z" fill="#bbb"/></svg></span>
</footer>
</body>
</html>
```
FILE: styles.css
```css
* { box-sizing: border-box; }
html, body { height: 100%; }
body {
  margin: 0;
  display: flex;
  flex-direction: column;
  border: 1px solid #0078d7;
  background: #f7f7f7;
  color: #000;
  font: 11px/16px "Open Sans", "Noto Sans", sans-serif;
  overflow: hidden;
}
h1, h2, h3, p, ol { margin: 0; padding: 0; font-size: inherit; font-weight: inherit; }
ol { list-style: none; }
button, select, input { font: inherit; color: inherit; margin: 0; padding: 0; border: 0; background: none; border-radius: 0; }
button { display: flex; align-items: center; justify-content: center; flex: none; }
a { color: inherit; text-decoration: none; }
svg { flex: none; display: block; }
sub, sup { font-size: 9px; line-height: 0; }
sub { vertical-align: -1px; }
sup { vertical-align: 3px; }
.defs { position: absolute; width: 0; height: 0; }

.title { display: flex; align-items: center; height: 30px; flex: none; padding: 0 2px 2px 8px; background: #0078d7; color: #fff; }
.title h1 { flex: 1; margin-left: 4px; }
.wb { width: 45px; height: 28px; }

.menu { display: flex; align-items: center; gap: 16px; height: 21px; flex: none; border-bottom: 1px solid #e0e0e0; }
.menu > svg { margin-right: -9px; }
.user { margin-left: auto; margin-right: -8px; }
.mdi { width: 17px; height: 19px; border: 1px solid #ddd; background: #fff; margin-right: -15px; }
.mdi:last-child { margin-right: 0; }

.bar { display: flex; align-items: center; height: 27px; flex: none; padding-bottom: 2px; }
.grip { width: 2px; height: 18px; margin: 0 3px 0 4px; flex: none; background: repeating-linear-gradient(#bbb 0 2px, #f7f7f7 2px 4px); }
.edge { width: 1px; height: 27px; margin: 0 0 0 1px; background: #d8d8d8; flex: none; }
.sep { width: 1px; height: 18px; margin: 0 3px; background: #d0d0d0; flex: none; }
.tb { width: 24px; height: 23px; margin: 0 1px; }
.tb svg { width: 19px; height: 19px; }
.tb.on { background: #cce4f7; border: 1px solid #99cbf2; }
.sc { font: bold 11px "Open Sans", sans-serif; fill: #333; }
.ca { width: 12px; height: 23px; color: #222; }
.ca.wide { width: 14px; }
.ca.off { color: #888; }
.ca svg { width: 7px; height: 4px; }
.more { width: 16px; font-size: 14px; color: #444; }
.combo { display: flex; align-items: center; height: 21px; flex: none; padding: 0 4px; background: #e6e6f0; }
.combo select { flex: 1; min-width: 0; appearance: none; padding-left: 4px; opacity: 1; }
.combo.grow { flex: 1; }
.badge { width: 30px; height: 14px; line-height: 14px; background: #000; color: #fff; text-align: center; }
.lf { padding: 0 7px 0 5px; border-right: 1px solid #fff; }
.mid { width: 121px; }
.mid select { padding-left: 1px; }
.arr { width: 15px; height: 21px; margin-left: 1px; background: #d2d2d2; color: #444; }
.arr svg { width: 4px; height: 7px; }
.arr.live { background: #f0f0f5; color: #000; }

main { display: flex; flex: 1; min-height: 0; }
.nav { display: flex; flex-direction: column; width: 268px; flex: none; margin: 0 5px 0 1px; }
.head { display: flex; align-items: center; height: 21px; flex: none; padding: 0 2px 0 6px; background: #d9e6f2; font-weight: bold; color: #3a3f46; }
.head button { width: 21px; height: 20px; }
.head button:first-of-type { margin-left: auto; }
.frame { display: flex; flex-direction: column; flex: 1; min-height: 0; margin-top: 2px; border: 2px solid #c8c8d4; border-bottom-width: 1px; }
.navsel { display: flex; padding: 1px 1px 9px 2px; }
.dis { flex: 1; background: #e6e6e6; color: #888; }
.tree { flex: 1; padding-top: 1px; background: #fff; }
.tree.low { flex: none; height: 160px; margin-top: 4px; padding-top: 2px; }
.row { display: flex; align-items: center; height: 18px; }
.cv { width: 10px; height: 7px; margin-right: 6px; }
.l0 { padding-left: 5px; }
.l1 { padding-left: 25px; }
.l2 { padding-left: 61px; }
.l1r { padding-left: 41px; }
.row input { appearance: none; width: 13px; height: 13px; flex: none; margin-bottom: 2px; background: #fff; border: 1px solid #333; border-radius: 50%; }
.row input[type=checkbox] { background: #cce4f7; border-color: #1a5c9e; border-radius: 0; }
.row input:checked { background: radial-gradient(#333 0 3px, #fff 4px); }
.cell { display: flex; align-items: center; gap: 5px; flex: 1; height: 18px; margin-left: 2px; padding: 1px 0 0 3px; }
.cell > svg { width: 16px; height: 14px; }
.low .cell > svg { height: 16px; }
.sel { background: #cce8ff; }
.tabs { display: flex; height: 25px; flex: none; border-top: 1px solid #c8c8d4; }
.tabs button { width: 38px; height: 23px; background: #ececec; border: 1px solid #c8c8d4; border-top: 0; border-left: 0; }
.tabs svg { width: 18px; height: 16px; }
.tabs .act { height: 25px; margin-top: -1px; background: #fff; border-bottom: 0; }

.work { display: flex; flex-direction: column; flex: 1; min-width: 0; }
.canvas { position: relative; flex: 1; min-height: 0; background: #fcfcfc; overflow: hidden; margin-left: -1px; }
.draw { position: absolute; width: 100%; height: 100%; }
.draw text { font-size: 11px; }
.info { position: absolute; left: 5px; top: 4px; line-height: 17px; }
.unit { padding-left: 3px; }
.ext { position: absolute; left: 5px; bottom: 2px; }
.info sub, .ext sub { font-size: 11px; vertical-align: -2px; }
.info sup, .ext sup { font-size: 11px; vertical-align: 4px; }

.panel { position: absolute; right: 23px; top: 153px; width: 227px; background: #f7f7f7; box-shadow: 2px 3px 10px rgba(0, 0, 0, .4); }
.panel h3 { display: flex; align-items: center; justify-content: space-between; height: 30px; padding: 4px 2px 2px 8px; background: #fff; color: #999; }
.panel h3 button { width: 19px; height: 19px; background: #e4e4e4; color: #fff; }
.pbody { border: 1px solid #c8c8d4; border-bottom: 0; }
.ptxt { height: 41px; padding: 4px 10px; line-height: 14px; background: #fff; }
.scale { display: flex; height: 340px; padding-top: 10px; }
.vals { width: 86px; text-align: right; line-height: 26px; margin-top: -4px; }
.sw { width: 41px; margin: 9px 6px 0 12px; }
.sw i { display: block; height: 24px; margin-bottom: 2px; }
.c1 { background: #bb0000; }
.c2 { background: #ff0000; }
.c3 { background: #ffaa00; }
.c4 { background: #d0d000; }
.c5 { background: #ffff00; }
.c6 { background: #00ff00; }
.c7 { background: #00e68a; }
.c8 { background: #00f5f5; }
.c9 { background: #0099ff; }
.c10 { background: #0000ff; }
.c11 { background: #0000aa; }
.sl { display: grid; width: 21px; height: 297px; margin-top: 2px; background: linear-gradient(#dcdcdc, #dcdcdc) center / 4px 100% no-repeat; }
.sl input { grid-area: 1 / 1; appearance: none; writing-mode: vertical-lr; direction: rtl; width: 21px; height: 297px; pointer-events: none; }
.sl input::-webkit-slider-thumb { appearance: none; width: 21px; height: 10px; background: #0078d7; pointer-events: auto; }
.pbtn { display: flex; justify-content: flex-end; gap: 6px; height: 33px; padding: 6px 6px 6px 0; background: #fff; }
.pbtn button { width: 25px; height: 21px; background: #cce4f7; }
.pbtn .on { border: 1px solid #00559b; }
.ptab { border-top: 1px solid #c8c8d4; }
.ptab button { width: 39px; height: 26px; margin-top: -1px; background: #fff; border-right: 1px solid #c8c8d4; }

.bottom { flex: none; margin-top: 4px; margin-left: -1px; }
.sub { height: 21px; padding-left: 8px; }
.low.bar { padding-left: 2px; }
.w200 { width: 200px; }
.w270 { width: 270px; margin-left: 2px; }
.low .sep { margin: 0 3px 0 2px; }
.dec { flex-direction: column; width: 27px; height: 25px; font-size: 10px; line-height: 13px; }
.dec i { width: 18px; height: 5px; background: #8fdc8f; }
.dec u { color: #1a3a8c; }
.grid { display: flex; border: 1px solid #c8c8d4; }
table { flex: 1; width: 0; table-layout: fixed; border-collapse: collapse; background: #fff; }
.k1 { width: 299px; }
.k2 { width: 60px; }
.k3 { width: 90px; }
.k4 { width: 60px; }
th { height: 20px; padding: 0 0 2px; background: #f0f0f0; font-weight: normal; border-right: 1px solid #d0d0d0; border-bottom: 1px solid #c8c8c8; }
td { height: 16px; padding: 0 4px; line-height: 15px; border-right: 1px solid #dcdcdc; white-space: nowrap; overflow: hidden; }
th:last-child, td:last-child { border-right: 0; }
.strip td { height: 10px; padding: 0; background: #e1e1e1; border-color: #f4f4f4; border-bottom: 1px solid #f4f4f4; }
td:first-child { padding: 0 0 0 1px; }
td:nth-child(3) { text-align: right; padding-right: 3px; }
.gut { float: left; width: 40px; height: 16px; margin-right: 2px; }
.alt { background: #f7f7f7; }
.sb { display: flex; flex-direction: column; align-items: center; width: 16px; padding: 6px 0; background: #f0f0f0; }
.sb svg { width: 8px; height: 6px; }
.sb .up { transform: rotate(180deg); }
.sb i { width: 16px; height: 48px; margin: 32px 0 auto; background: #cdcdcd; }
.sheets { display: flex; align-items: center; height: 21px; }
.pg { width: 17px; height: 20px; color: #888; }
.sheets span { padding: 0 14px; }
.sheet { height: 22px; margin-top: -1px; padding: 0 8px; background: #fff; border: 1px solid #c8c8d4; border-top: 0; }

.status { display: flex; align-items: center; justify-content: flex-end; height: 24px; flex: none; padding-top: 3px; }
.snap { display: flex; gap: 2px; margin-right: 1px; }
.snap button { height: 18px; padding: 0 3px; background: #ebebeb; border: 1px solid #bbb; border-right-color: #fff; border-bottom-color: #fff; }
.status > span { height: 18px; padding-left: 5px; line-height: 18px; border-left: 1px solid #d0d0d0; }
.s1 { width: 115px; }
.s2 { width: 106px; }
.s3 { width: 157px; }
.s4 { width: 76px; }
.s5 { width: 19px; display: flex; align-items: flex-end; }
```
